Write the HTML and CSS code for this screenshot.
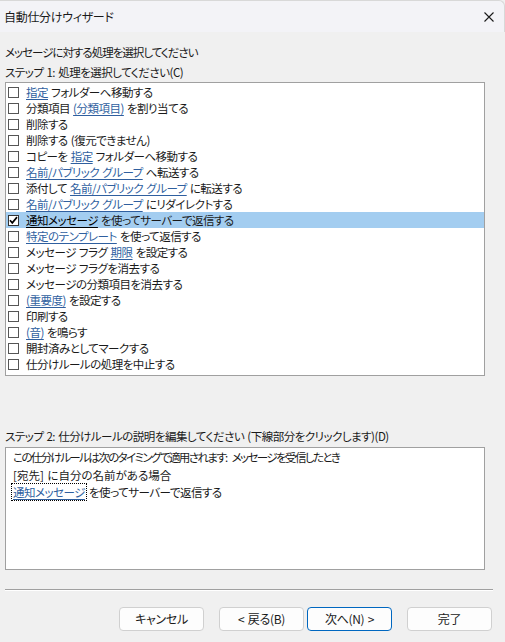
FILE: index.html
```html
<!DOCTYPE html>
<html lang="ja">
<head>
<meta charset="utf-8">
<title>自動仕分けウィザード</title>
<link rel="stylesheet" href="styles.css">
</head>
<body>
<div class="window">
  <div class="titlebar">
    <span class="title">自動仕分けウィザード</span>
    <svg class="close" width="10" height="10" viewBox="0 0 10 10"><path d="M0.5 0.5 L9.5 9.5 M9.5 0.5 L0.5 9.5" stroke="#1a1a1a" stroke-width="1.1" fill="none"/></svg>
  </div>
  <div class="content">
    <div class="label narrow">メッセージに対する処理を選択してください</div>
    <div class="label">ステップ 1: 処理を選択してください(C)</div>
    <ul class="list">
      <li class="row"><span class="cb"></span><span><a class="lk">指定</a> フォルダーへ移動する</span></li>
      <li class="row"><span class="cb"></span><span>分類項目 <a class="lk">(分類項目)</a> を割り当てる</span></li>
      <li class="row"><span class="cb"></span><span>削除する</span></li>
      <li class="row"><span class="cb"></span><span>削除する (復元できません)</span></li>
      <li class="row"><span class="cb"></span><span>コピーを <a class="lk">指定</a> フォルダーへ移動する</span></li>
      <li class="row"><span class="cb"></span><span><a class="lk">名前/パブリック グループ</a> へ転送する</span></li>
      <li class="row"><span class="cb"></span><span>添付して <a class="lk">名前/パブリック グループ</a> に転送する</span></li>
      <li class="row"><span class="cb"></span><span><a class="lk">名前/パブリック グループ</a> にリダイレクトする</span></li>
      <li class="row selected"><span class="cb checked"><svg width="11" height="11" viewBox="0 0 11 11"><path d="M1.2 5.2 L4 8.4 L9.8 1.4" stroke="#000" stroke-width="2" fill="none"/></svg></span><span><a class="lk">通知メッセージ</a> を使ってサーバーで返信する</span></li>
      <li class="row"><span class="cb"></span><span><a class="lk">特定のテンプレート</a> を使って返信する</span></li>
      <li class="row"><span class="cb"></span><span>メッセージ フラグ <a class="lk">期限</a> を設定する</span></li>
      <li class="row"><span class="cb"></span><span>メッセージ フラグを消去する</span></li>
      <li class="row"><span class="cb"></span><span>メッセージの分類項目を消去する</span></li>
      <li class="row"><span class="cb"></span><span><a class="lk">(重要度)</a> を設定する</span></li>
      <li class="row"><span class="cb"></span><span>印刷する</span></li>
      <li class="row"><span class="cb"></span><span><a class="lk">(音)</a> を鳴らす</span></li>
      <li class="row"><span class="cb"></span><span>開封済みとしてマークする</span></li>
      <li class="row"><span class="cb"></span><span>仕分けルールの処理を中止する</span></li>
    </ul>
    <div class="label step2">ステップ 2: 仕分けルールの説明を編集してください (下線部分をクリックします)(D)</div>
    <div class="desc">
      <div class="dline tight">この仕分けルールは次のタイミングで適用されます: メッセージを受信したとき</div>
      <div class="dline loose">[宛先] に自分の名前がある場合</div>
      <div class="dline"><a class="lk focus">通知メッセージ</a> を使ってサーバーで返信する</div>
    </div>
    <div class="sep"></div>
    <div class="buttons">
      <button class="btn">キャンセル</button>
      <div class="pair">
        <button class="btn">&lt; 戻る(B)</button>
        <button class="btn primary">次へ(N) &gt;</button>
      </div>
      <button class="btn">完了</button>
    </div>
  </div>
</div>
</body>
</html>
```
FILE: styles.css
```css
* { box-sizing: border-box; }
html, body { margin: 0; padding: 0; }
body {
  width: 505px;
  height: 642px;
  background: #f0f0f0;
  font-family: "Noto Sans CJK JP", "Noto Sans", sans-serif;
  font-size: 11.5px;
  letter-spacing: -0.5px;
  word-spacing: 1px;
  color: #1a1a1a;
  font-feature-settings: "palt";
  overflow: hidden;
}
.window { width: 505px; height: 642px; display: flex; flex-direction: column; }
.titlebar {
  height: 32px;
  background: #f3f3f7;
  display: flex;
  align-items: center;
  justify-content: space-between;
  padding: 0 10px 0 4px;
  border-top: 1px solid #d8d8d8;
  border-right: 1px solid #d8d8d8;
  border-top-right-radius: 6px;
}
.title { font-size: 12px; line-height: 16px; letter-spacing: -0.3px; }
.close { display: block; }
.content { padding: 10px 0 0 5px; display: flex; flex-direction: column; }
.label { height: 20px; line-height: 20px; white-space: nowrap; }
.label.narrow { letter-spacing: -1px; }
.list {
  list-style: none;
  margin: 0;
  padding: 1px 0 3px 0;
  width: 480px;
  height: 294px;
  background: #fff;
  border: 1px solid #a0a0a0;
}
.row {
  height: 16px;
  line-height: 16px;
  display: flex;
  align-items: center;
  gap: 7px;
  padding-left: 2px;
  white-space: nowrap;
}
.row.selected { background: #a3cdf0; }
.cb {
  width: 11px;
  height: 11px;
  border: 1px solid #555;
  background: #fff;
  flex: none;
  display: flex;
  align-items: center;
  justify-content: center;
}
.cb.checked { border-color: #333; }
.cb svg { display: block; }
.lk { color: #2f5f9f; text-decoration: underline; text-underline-offset: 2px; }
.selected .lk { color: #000; }
.step2 { margin-top: 52px; height: 19px; line-height: 16px; }
.desc {
  width: 480px;
  height: 123px;
  background: #fff;
  border: 1px solid #a0a0a0;
  padding: 1px 0 0 7px;
}
.dline { height: 17.5px; line-height: 17.5px; white-space: nowrap; }
.dline.tight { letter-spacing: -1.6px; word-spacing: 4px; }
.dline.loose { letter-spacing: 0; }
.focus { outline: 1px dotted #000; outline-offset: 0; padding: 0 1px; margin-left: -1px; }
.sep {
  margin-top: 19px;
  width: 488px;
  height: 2px;
  border-top: 1px solid #a0a0a0;
  border-bottom: 1px solid #ffffff;
}
.buttons {
  margin-top: 16px;
  margin-left: 114px;
  width: 373px;
  display: flex;
  justify-content: space-between;
}
.pair { display: flex; gap: 3px; }
.btn {
  width: 85px;
  height: 24px;
  background: #fdfdfd;
  border: 1px solid #d0d0d0;
  border-radius: 4px;
  font-family: inherit;
  font-size: 12px;
  letter-spacing: -0.3px;
  word-spacing: 1px;
  font-feature-settings: "palt";
  color: #1a1a1a;
  padding: 0;
  line-height: 22px;
}
.btn.primary { border-color: #0067c0; }
```
